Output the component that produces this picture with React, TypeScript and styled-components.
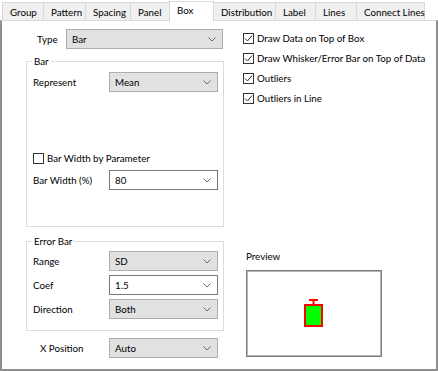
import React from 'react';
import styled, { createGlobalStyle } from 'styled-components';

const GlobalStyle = createGlobalStyle`
  html, body {
    margin: 0;
    padding: 0;
    background: #fff;
  }
  body {
    font-family: Lato, 'Segoe UI', sans-serif;
    font-size: 9.75px;
    color: #000;
    white-space: nowrap;
  }
`;

const Frame = styled.div`
  width: 438px;
  height: 371px;
  display: flex;
  flex-direction: column;
  background: #fff;
  box-sizing: border-box;
`;

const TabStrip = styled.div`
  display: flex;
  align-items: flex-end;
  height: 21px;
  padding-left: 2px;
  position: relative;
  z-index: 1;
`;

const Tab = styled.div<{ $w: number; $active?: boolean }>`
  box-sizing: border-box;
  width: ${(p) => p.$w}px;
  height: ${(p) => (p.$active ? 21 : 19)}px;
  margin-left: -1px;
  padding: ${(p) => (p.$active ? '2px 0 0 7px' : '3px 0 0 7px')};
  background: ${(p) => (p.$active ? '#fff' : '#f0f0f0')};
  border: 1px solid #d9d9d9;
  border-bottom: ${(p) => (p.$active ? 'none' : '1px solid #d9d9d9')};
  margin-bottom: ${(p) => (p.$active ? '-1px' : '0')};
  line-height: 13px;
  &:first-child {
    margin-left: 0;
  }
`;

const Panel = styled.div`
  flex: 1;
  display: flex;
  box-sizing: border-box;
  border-top: 1px solid #d9d9d9;
  border-left: 2px solid #8e8e8e;
  border-right: 2px solid #8e8e8e;
  border-bottom: 2px solid #8e8e8e;
  margin-top: -1px;
`;

const LeftCol = styled.div`
  width: 222px;
  padding-left: 24px;
  box-sizing: border-box;
  display: flex;
  flex-direction: column;
`;

const RightCol = styled.div`
  flex: 1;
  padding-left: 19px;
  padding-top: 7px;
  display: flex;
  flex-direction: column;
`;

const Row = styled.div<{ $top?: number; $indent?: number }>`
  display: flex;
  align-items: center;
  margin-top: ${(p) => p.$top ?? 0}px;
  padding-left: ${(p) => p.$indent ?? 0}px;
`;

const Label = styled.div<{ $w: number }>`
  width: ${(p) => p.$w}px;
  flex-shrink: 0;
`;

const Select = styled.div<{ $w: number; $white?: boolean }>`
  box-sizing: border-box;
  width: ${(p) => p.$w}px;
  height: 20px;
  display: flex;
  align-items: center;
  justify-content: space-between;
  padding: 0 6px 0 5px;
  background: ${(p) => (p.$white ? '#fff' : '#e1e1e1')};
  border: 1px solid ${(p) => (p.$white ? '#7a7a7a' : '#adadad')};
`;

const Chevron = () => (
  <svg width="8" height="5" viewBox="0 0 8 5">
    <path d="M0.5 0.5 L4 4 L7.5 0.5" fill="none" stroke="#6a6a6a" strokeWidth="1" />
  </svg>
);

const Group = styled.div<{ $h: number; $top: number }>`
  position: relative;
  box-sizing: border-box;
  height: ${(p) => p.$h}px;
  margin-top: ${(p) => p.$top}px;
  border: 1px solid #dcdcdc;
  padding: 9px 5px 0 6px;
  display: flex;
  flex-direction: column;
`;

const Legend = styled.span`
  position: absolute;
  top: -8px;
  left: 5px;
  padding: 0 2px;
  background: #fff;
  line-height: 14px;
`;

const CheckRow = styled.div<{ $top?: number }>`
  display: flex;
  align-items: center;
  height: 20px;
  margin-top: ${(p) => p.$top ?? 0}px;
  gap: 3px;
`;

const Box = styled.div`
  width: 11px;
  height: 11px;
  box-sizing: border-box;
  border: 1px solid #333;
  background: #fff;
  display: flex;
  align-items: center;
  justify-content: center;
`;

const Check = ({ on }: { on?: boolean }) => (
  <Box>
    {on && (
      <svg width="9" height="9" viewBox="0 0 9 9">
        <path d="M1 4.5 L3.5 7 L8 1.5" fill="none" stroke="#333" strokeWidth="1" />
      </svg>
    )}
  </Box>
);

const PreviewTitle = styled.div`
  margin-top: 142px;
  padding-left: 3px;
`;

const Preview = styled.div`
  box-sizing: border-box;
  margin-top: 8px;
  margin-left: 3px;
  width: 136px;
  height: 87px;
  border: 1px solid #7c7c7c;
  box-shadow: inset 0 0 0 1px #b4b4b4;
  display: flex;
  align-items: center;
  justify-content: center;
`;

const tabs: [string, number][] = [
  ['Group', 42],
  ['Pattern', 43],
  ['Spacing', 46],
  ['Panel', 40],
  ['Box', 45],
  ['Distribution', 63],
  ['Label', 41],
  ['Lines', 42],
  ['Connect Lines', 69],
];

const SelectField = ({ value, w, white }: { value: string; w: number; white?: boolean }) => (
  <Select $w={w} $white={white}>
    <span>{value}</span>
    <Chevron />
  </Select>
);

export default function App() {
  return (
    <>
      <GlobalStyle />
      <Frame>
        <TabStrip>
          {tabs.map(([t, w]) => (
            <Tab key={t} $w={w} $active={t === 'Box'}>
              {t}
            </Tab>
          ))}
        </TabStrip>
        <Panel>
          <LeftCol>
            <Row $top={8} $indent={11}>
              <Label $w={29}>Type</Label>
              <SelectField value="Bar" w={157} />
            </Row>
            <Group $h={166} $top={12}>
              <Legend>Bar</Legend>
              <Row $top={1}>
                <Label $w={76}>Represent</Label>
                <SelectField value="Mean" w={109} />
              </Row>
              <CheckRow $top={56}>
                <Check />
                <span>Bar Width by Parameter</span>
              </CheckRow>
              <Row $top={2}>
                <Label $w={76}>Bar Width (%)</Label>
                <SelectField value="80" w={109} white />
              </Row>
            </Group>
            <Group $h={90} $top={14}>
              <Legend>Error Bar</Legend>
              <Row>
                <Label $w={76}>Range</Label>
                <SelectField value="SD" w={109} />
              </Row>
              <Row $top={4}>
                <Label $w={76}>Coef</Label>
                <SelectField value="1.5" w={109} white />
              </Row>
              <Row $top={4}>
                <Label $w={76}>Direction</Label>
                <SelectField value="Both" w={109} />
              </Row>
            </Group>
            <Row $top={7} $indent={14}>
              <Label $w={69}>X Position</Label>
              <SelectField value="Auto" w={109} />
            </Row>
          </LeftCol>
          <RightCol>
            <CheckRow>
              <Check on />
              <span>Draw Data on Top of Box</span>
            </CheckRow>
            <CheckRow>
              <Check on />
              <span>Draw Whisker/Error Bar on Top of Data</span>
            </CheckRow>
            <CheckRow>
              <Check on />
              <span>Outliers</span>
            </CheckRow>
            <CheckRow>
              <Check on />
              <span>Outliers in Line</span>
            </CheckRow>
            <PreviewTitle>Preview</PreviewTitle>
            <Preview>
              <svg width="22" height="30" viewBox="0 0 22 30">
                <path d="M6 1 H15 M10.5 1 V6" stroke="#ff0000" strokeWidth="2" fill="none" />
                <rect x="2" y="6" width="17" height="21" fill="#00ff00" stroke="#ff0000" strokeWidth="2" />
              </svg>
            </Preview>
          </RightCol>
        </Panel>
      </Frame>
    </>
  );
}
